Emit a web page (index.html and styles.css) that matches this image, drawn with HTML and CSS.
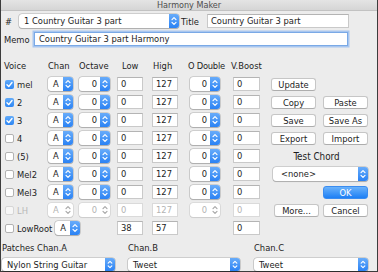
FILE: index.html
```html
<!DOCTYPE html>
<html>
<head>
<meta charset="utf-8">
<link rel="stylesheet" href="styles.css">
</head>
<body>
<svg class="defs" width="0" height="0">
  <defs>
    <symbol id="chev" viewBox="0 0 10 14"><path d="M3 5.6 L5 3.6 L7 5.6 M3 8.4 L5 10.4 L7 8.4" fill="none" stroke="currentColor" stroke-width="1.2" stroke-linecap="round" stroke-linejoin="round"/></symbol>
    <symbol id="tick" viewBox="0 0 10 10"><path d="M2.2 5.2 L4.2 7.2 L7.8 2.8" fill="none" stroke="#fff" stroke-width="1.5" stroke-linecap="round" stroke-linejoin="round"/></symbol>
  </defs>
</svg>
<div class="win">
  <div class="titlebar">Harmony Maker</div>
  <div class="content">
    <div class="toprow">
      <span class="hash">#</span>
      <div class="popup w-song"><span class="ptext">1 Country Guitar 3 part</span><span class="stepper"><svg><use href="#chev"/></svg></span></div>
      <span class="title-lbl">Title</span>
      <div class="field w-title">Country Guitar 3 part</div>
    </div>
    <div class="memorow">
      <span class="memo-lbl">Memo</span>
      <div class="field focus w-memo">Country Guitar 3 part Harmony</div>
    </div>

    <div class="grid">
      <span class="hd h-voice">Voice</span>
      <span class="hd h-chan">Chan</span>
      <span class="hd h-oct">Octave</span>
      <span class="hd h-low">Low</span>
      <span class="hd h-high">High</span>
      <span class="hd h-od">O Double</span>
      <span class="hd h-vb">V.Boost</span>
      <span></span><span></span>

      <!-- mel -->
      <span class="voice"><span class="cb on"><svg><use href="#tick"/></svg></span>mel</span>
      <div class="popup w-chan"><span class="ptext">A</span><span class="stepper"><svg><use href="#chev"/></svg></span></div>
      <div class="popup w-oct"><span class="ptext r">0</span><span class="stepper"><svg><use href="#chev"/></svg></span></div>
      <div class="field w-num">0</div>
      <div class="field w-num">127</div>
      <div class="popup w-od"><span class="ptext r">0</span><span class="stepper"><svg><use href="#chev"/></svg></span></div>
      <div class="field w-vb">0</div>
      <button class="btn">Update</button>
      <span></span>

      <!-- 2 -->
      <span class="voice"><span class="cb on"><svg><use href="#tick"/></svg></span>2</span>
      <div class="popup w-chan"><span class="ptext">A</span><span class="stepper"><svg><use href="#chev"/></svg></span></div>
      <div class="popup w-oct"><span class="ptext r">0</span><span class="stepper"><svg><use href="#chev"/></svg></span></div>
      <div class="field w-num">0</div>
      <div class="field w-num">127</div>
      <div class="popup w-od"><span class="ptext r">0</span><span class="stepper"><svg><use href="#chev"/></svg></span></div>
      <div class="field w-vb">0</div>
      <button class="btn">Copy</button>
      <button class="btn">Paste</button>

      <!-- 3 -->
      <span class="voice"><span class="cb on"><svg><use href="#tick"/></svg></span>3</span>
      <div class="popup w-chan"><span class="ptext">A</span><span class="stepper"><svg><use href="#chev"/></svg></span></div>
      <div class="popup w-oct"><span class="ptext r">0</span><span class="stepper"><svg><use href="#chev"/></svg></span></div>
      <div class="field w-num">0</div>
      <div class="field w-num">127</div>
      <div class="popup w-od"><span class="ptext r">0</span><span class="stepper"><svg><use href="#chev"/></svg></span></div>
      <div class="field w-vb">0</div>
      <button class="btn">Save</button>
      <button class="btn">Save As</button>

      <!-- 4 -->
      <span class="voice"><span class="cb"></span>4</span>
      <div class="popup w-chan"><span class="ptext">A</span><span class="stepper"><svg><use href="#chev"/></svg></span></div>
      <div class="popup w-oct"><span class="ptext r">0</span><span class="stepper"><svg><use href="#chev"/></svg></span></div>
      <div class="field w-num">0</div>
      <div class="field w-num">127</div>
      <div class="popup w-od"><span class="ptext r">0</span><span class="stepper"><svg><use href="#chev"/></svg></span></div>
      <div class="field w-vb">0</div>
      <button class="btn">Export</button>
      <button class="btn">Import</button>

      <!-- (5) -->
      <span class="voice"><span class="cb"></span>(5)</span>
      <div class="popup w-chan"><span class="ptext">A</span><span class="stepper"><svg><use href="#chev"/></svg></span></div>
      <div class="popup w-oct"><span class="ptext r">0</span><span class="stepper"><svg><use href="#chev"/></svg></span></div>
      <div class="field w-num">0</div>
      <div class="field w-num">127</div>
      <div class="popup w-od"><span class="ptext r">0</span><span class="stepper"><svg><use href="#chev"/></svg></span></div>
      <div class="field w-vb">0</div>
      <span class="testchord">Test Chord</span>

      <!-- Mel2 -->
      <span class="voice"><span class="cb"></span>Mel2</span>
      <div class="popup w-chan"><span class="ptext">A</span><span class="stepper"><svg><use href="#chev"/></svg></span></div>
      <div class="popup w-oct"><span class="ptext r">0</span><span class="stepper"><svg><use href="#chev"/></svg></span></div>
      <div class="field w-num">0</div>
      <div class="field w-num">127</div>
      <div class="popup w-od"><span class="ptext r">0</span><span class="stepper"><svg><use href="#chev"/></svg></span></div>
      <div class="field w-vb">0</div>
      <div class="popup w-none"><span class="ptext">&lt;none&gt;</span><span class="stepper"><svg><use href="#chev"/></svg></span></div>

      <!-- Mel3 -->
      <span class="voice"><span class="cb"></span>Mel3</span>
      <div class="popup w-chan"><span class="ptext">A</span><span class="stepper"><svg><use href="#chev"/></svg></span></div>
      <div class="popup w-oct"><span class="ptext r">0</span><span class="stepper"><svg><use href="#chev"/></svg></span></div>
      <div class="field w-num">0</div>
      <div class="field w-num">127</div>
      <div class="popup w-od"><span class="ptext r">0</span><span class="stepper"><svg><use href="#chev"/></svg></span></div>
      <div class="field w-vb">0</div>
      <span></span>
      <button class="btn ok">OK</button>

      <!-- LH (disabled) -->
      <span class="voice dis"><span class="cb dis"></span>LH</span>
      <div class="popup w-chan dis"><span class="ptext">A</span><span class="stepper"><svg><use href="#chev"/></svg></span></div>
      <div class="popup w-oct dis"><span class="ptext r">0</span><span class="stepper"><svg><use href="#chev"/></svg></span></div>
      <div class="field w-num dis">0</div>
      <div class="field w-num dis">127</div>
      <div class="popup w-od dis"><span class="ptext r">0</span><span class="stepper"><svg><use href="#chev"/></svg></span></div>
      <div class="field w-vb dis">0</div>
      <button class="btn more">More...</button>
      <button class="btn">Cancel</button>

      <!-- LowRoot -->
      <span class="voice lowroot"><span class="cb"></span>LowRoot<span class="popup w-chan"><span class="ptext">A</span><span class="stepper"><svg><use href="#chev"/></svg></span></span></span>
      <span class="c4 field w-num">38</span>
      <span class="field w-num">57</span>
      <span></span>
      <span class="field w-vb">0</span>
    </div>

    <div class="patches">
      <span class="plbl">Patches Chan.A</span>
      <span class="plbl">Chan.B</span>
      <span class="plbl">Chan.C</span>
      <div class="popup w-pa"><span class="ptext">Nylon String Guitar</span><span class="stepper"><svg><use href="#chev"/></svg></span></div>
      <div class="popup w-pb"><span class="ptext">Tweet</span><span class="stepper"><svg><use href="#chev"/></svg></span></div>
      <div class="popup w-pc"><span class="ptext">Tweet</span><span class="stepper"><svg><use href="#chev"/></svg></span></div>
    </div>
  </div>
</div>
</body>
</html>
```

FILE: styles.css
```css
* { box-sizing: border-box; }
html, body { margin: 0; padding: 0; }
body {
  width: 378px; height: 272px; overflow: hidden;
  background: #ececec;
  font-family: "DejaVu Sans Condensed", "DejaVu Sans", sans-serif;
  font-stretch: condensed;
  font-size: 9.3px;
  color: #1c1c1c;
}
.defs { position: absolute; width: 0; height: 0; }
.win {
  width: 378px; height: 272px;
  border: 1px solid #3c3c3c; border-top: none;
  background: #ececec;
  display: flex; flex-direction: column;
}
.titlebar {
  height: 11px; flex: none;
  background: linear-gradient(#e4e4e4, #d5d5d5);
  border-bottom: 1px solid #c2c2c2;
  text-align: center;
  font-size: 9px; line-height: 10px;
  color: #4e4e4e;
  overflow: hidden;
}
.content { padding: 3px 0 0 4px; display: flex; flex-direction: column; }

.toprow { display: flex; align-items: center; height: 14px; }
.hash { width: 14px; }
.w-song { width: 160px; }
.title-lbl { width: 28px; padding-left: 2px; }
.w-title { width: 142px; }

.memorow { display: flex; align-items: center; height: 14px; margin-top: 4px; }
.memo-lbl { width: 30px; margin-left: -1px; }
.w-memo { width: 314px; }

.field {
  height: 14px; background: #fff;
  border: 1px solid #c9c9c9; border-top-color: #b4b4b4;
  padding-left: 3px; line-height: 12px;
  white-space: nowrap; overflow: hidden;
}
.field.focus {
  border-color: #7aa9e6;
  box-shadow: 0 0 0 1.5px #a8c6ef;
  padding-left: 4px;
}
.field.dis { color: #b3b3b3; border-color: #dadada; }

.popup {
  display: flex; align-items: stretch;
  height: 14px; background: #fff;
  border-radius: 3px;
  box-shadow: 0 0 0 0.6px rgba(0,0,0,0.22), 0 0.8px 1px rgba(0,0,0,0.18);
}
.ptext { flex: 1; padding-left: 5px; line-height: 14px; white-space: nowrap; overflow: hidden; }
.ptext.r { text-align: right; padding-right: 3px; padding-left: 0; }
.stepper {
  width: 10px; flex: none;
  background: linear-gradient(#68acfa, #2a82f4);
  border-radius: 0 3px 3px 0;
  color: #fff;
  display: flex; align-items: center; justify-content: center;
}
.stepper svg { width: 10px; height: 14px; }
.popup.dis { box-shadow: 0 0 0 0.6px rgba(0,0,0,0.12), 0 0.8px 1px rgba(0,0,0,0.08); }
.popup.dis .ptext { color: #b3b3b3; }
.popup.dis .stepper { background: none; color: #a9a9a9; }

.grid {
  display: grid;
  grid-template-columns: 43px 31px 38px 35px 37px 44px 38px 52px 47px;
  grid-template-rows: 20px repeat(9, 18px);
  align-items: center;
  margin-top: 9px;
}
.hd { white-space: nowrap; }
.h-voice { margin-left: -1px; }
.h-low { margin-left: 5px; }
.h-high { margin-left: 1px; }
.h-od { margin-left: -1px; letter-spacing: -0.25px; }
.h-vb { margin-left: -2px; }

.voice { display: flex; align-items: center; gap: 3px; white-space: nowrap; }
.voice.dis { color: #b8b8b8; }
.cb {
  width: 9px; height: 9px; flex: none;
  background: #fff;
  border: 1px solid #b2b2b2;
  border-radius: 2px;
  display: flex; align-items: center; justify-content: center;
}
.cb svg { width: 9px; height: 9px; }
.cb.on { background: linear-gradient(#62abf9, #2d86f4); border: none; }
.cb.dis { border-color: #d6d6d6; background: #f7f7f7; }
.lowroot { grid-column: 1 / span 3; }
.c4 { grid-column: 4; }

.w-chan { width: 25px; }
.w-oct { width: 31px; }
.w-num { width: 26px; }
.w-od { width: 30px; margin-left: 1px; }
.w-vb { width: 27px; }

.btn {
  font: inherit; color: #222;
  width: 45px; height: 13px; padding: 0;
  background: #fff;
  border: 1px solid #c6c6c6; border-bottom-color: #adadad;
  border-radius: 3px;
  line-height: 11px;
}
.btn.ok {
  background: linear-gradient(#6ab2fb, #1d7ff5);
  border-color: #3a8cf0;
  color: #fff;
}
.btn.more { margin-left: 3px; }
.testchord { grid-column: 8 / span 2; text-align: center; padding-right: 8px; font-size: 9.8px; }
.w-none { grid-column: 8 / span 2; width: 95px; margin-left: 2px; }
.w-none .ptext { padding-left: 8px; }

.patches {
  display: grid;
  grid-template-columns: 126px 126px 114px;
  grid-template-rows: 10px 13px;
  row-gap: 5px;
  margin: 6px 0 0 -3px;
  align-items: center;
}
.plbl { line-height: 10px; }
.patches .popup { height: 13px; }
.patches .ptext { line-height: 13px; padding-left: 5px; }
.patches .stepper svg { height: 13px; }
.w-pa { width: 113px; }
.w-pb { width: 112px; }
.w-pc { width: 114px; }
```
